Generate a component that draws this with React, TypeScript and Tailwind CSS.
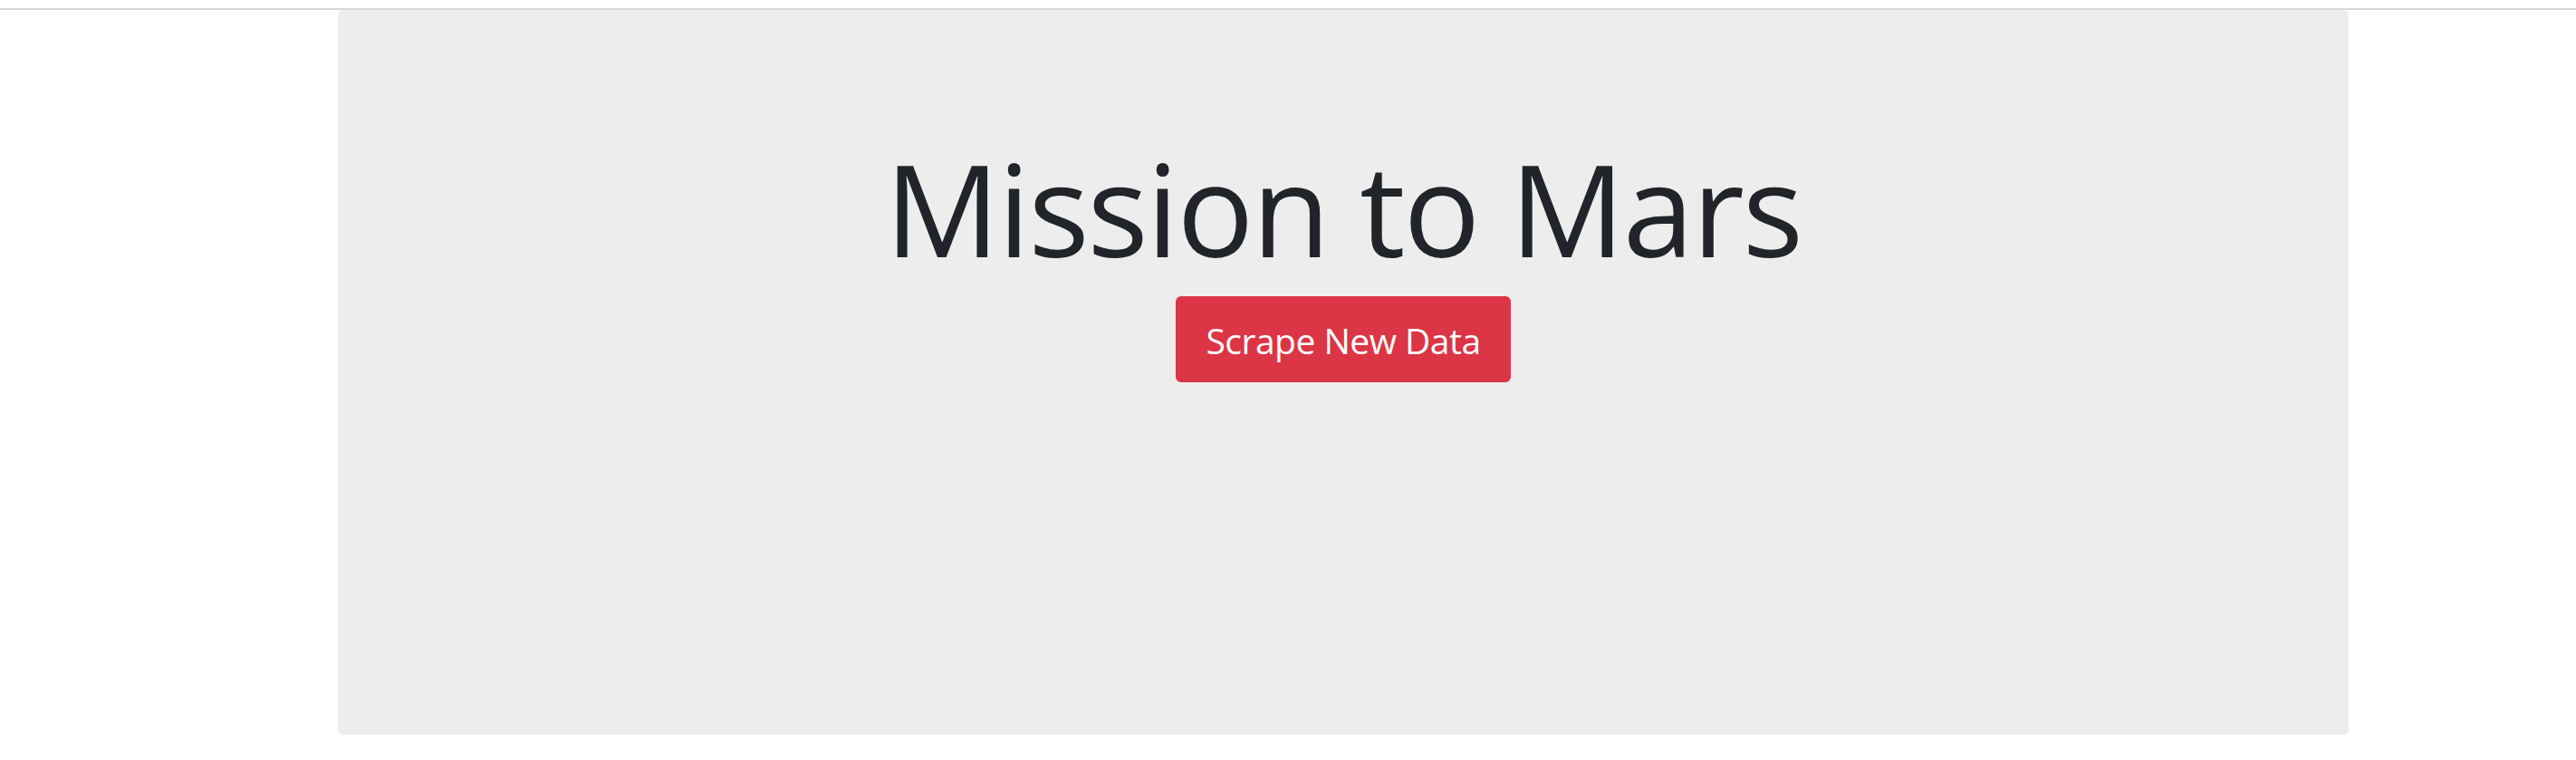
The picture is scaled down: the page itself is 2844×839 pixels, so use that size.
export default function App() {
  return (
    <div className="min-h-[839px] bg-white pt-[9px]" style={{ fontFamily: '"Open Sans", "Noto Sans", sans-serif' }}>
      <div className="border-t-2 border-[#d7d7da]" />
      <div className="ml-[373px] w-[2220px] h-[800px] rounded-[6px] bg-[#ededed] flex flex-col items-center pt-[134px]">
        <h1 className="text-[141px] leading-[169px] font-normal tracking-[-2px] text-[#212529]">Mission to Mars</h1>
        <button className="mt-[13px] w-[370px] h-[95px] rounded-[6px] bg-[#dc3545] text-white text-[39px] leading-none tracking-[-0.5px] flex items-center justify-center pt-[2px]">
          Scrape New Data
        </button>
      </div>
    </div>
  );
}
